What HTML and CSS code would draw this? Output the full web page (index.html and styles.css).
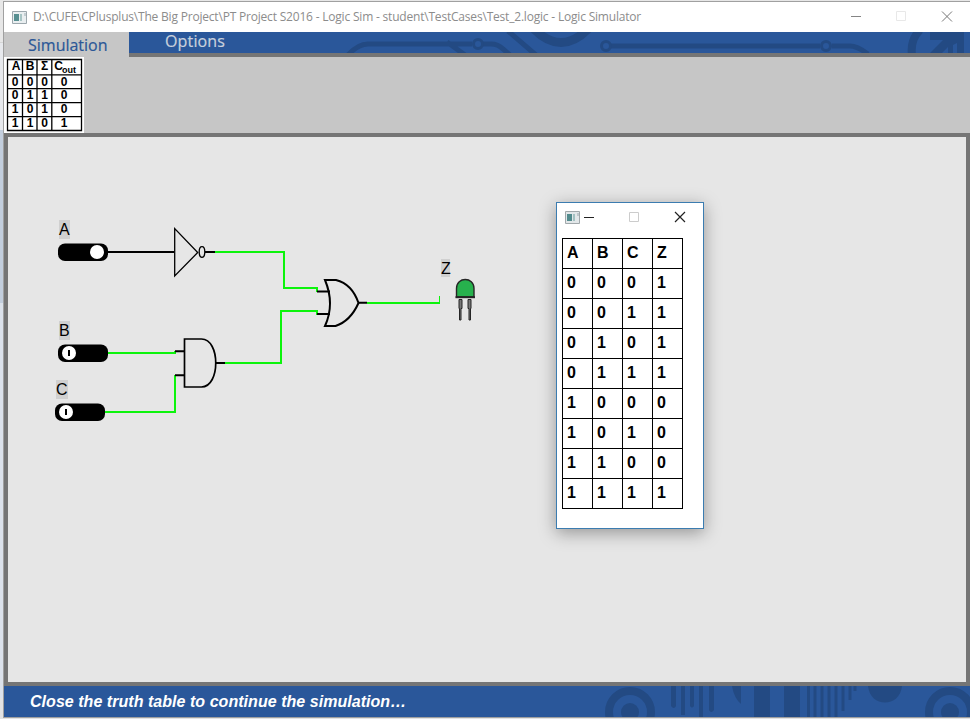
FILE: index.html
```html
<!DOCTYPE html>
<html lang="en">
<head>
<meta charset="utf-8">
<title>Logic Simulator</title>
<link rel="stylesheet" href="styles.css">
</head>
<body>
<main class="window">
  <header class="titlebar">
    <svg class="app-icon" width="15" height="13" viewBox="0 0 15 13"><path fill="#e9eef0" stroke="#9ca7ad" d="M.5.5h14v12H.5z"/><path fill="#578f91" d="M2 3h5v7H2z"/><path fill="#a6c4c4" d="M8 3h2v7H8z"/><path fill="#c3cdd1" d="M12 2h2v3h-2z"/></svg>
    <span class="title">D:\CUFE\CPlusplus\The Big Project\PT Project S2016 - Logic Sim - student\TestCases\Test_2.logic - Logic Simulator</span>
    <svg class="controls" width="104" height="12" viewBox="0 0 104 12" fill="none"><path stroke="#858585" d="M0 5.500h10"/><path stroke="#e8e8e8" d="M45.500.500h9v9h-9z"/><path stroke="#777" d="M91 .5l10 10m0-10l-10 10"/></svg>
  </header>
  <nav class="tabs">
    <div class="tab active">Simulation</div>
    <div class="ribbon">
      <svg class="circuit" width="841" height="21" viewBox="129 32 841 21" fill="none" stroke="#234a83" stroke-width="5">
        <path d="M348 55q10-11 20-11h104M447 42l18 13M483 44h8q7 0 12 5l7 6M508 31l28 24M611 46h209M832 46h18q7 0 18 8"/>
        <circle cx="478" cy="44" r="4.500" stroke-width="3"/><circle cx="606" cy="46" r="4.500" stroke-width="3"/><circle cx="826" cy="46" r="4.500" stroke-width="3"/>
        <path stroke-width="9" d="M533 28q28 29 56 0"/>
        <path stroke-width="8" d="M920 30q-10 10-8 25"/><path stroke="none" fill="#234a83" d="M930 32h34v22h-7V43l-4 2v9h-5v-7l-7 7h-12l14-14h-13z"/>
      </svg>
      <div class="tab options">Options</div>
    </div>
  </nav>
  <section class="toolbar">
    <svg class="table-tool" width="80" height="76" viewBox="4 57 80 76">
      <path fill="#fff" d="M4 57h80v76H4z"/>
      <path fill="none" stroke="#000" stroke-width="1.300" d="M7.500 59.500h74v71h-74zM22.500 59.500v71M37 59.500v71M51.800 59.500v71M7.500 74.800h74M7.500 88.600h74M7.500 102.600h74M7.500 116.700h74"/>
      <g class="tool-text"><text x="16" y="70.200">A</text><text x="30" y="70.200">B</text><text x="44.500" y="70.200">Σ</text><text x="58.500" y="70.200">C</text><text class="sub" x="69" y="73">out</text>
      <text x="15" y="85.500">0</text><text x="30" y="85.500">0</text><text x="44.500" y="85.500">0</text><text x="64" y="85.500">0</text>
      <text x="15" y="99.300">0</text><text x="30" y="99.300">1</text><text x="44.500" y="99.300">1</text><text x="64" y="99.300">0</text>
      <text x="15" y="113.300">1</text><text x="30" y="113.300">0</text><text x="44.500" y="113.300">1</text><text x="64" y="113.300">0</text>
      <text x="15" y="127.300">1</text><text x="30" y="127.300">1</text><text x="44.500" y="127.300">0</text><text x="64" y="127.300">1</text></g>
    </svg>
  </section>
  <section class="canvas">
    <svg class="schematic" width="958" height="545" viewBox="8 137 958 545">
      <g fill="none" stroke="#0cf40c" stroke-width="2">
        <path d="M215 252h69v36h33v4M224 363h57v-52h36v4M107 353h68v-2M105 412h70v-37M367 303h72"/>
        <path stroke-width="1" d="M439.500 304v-8"/>
      </g>
      <g fill="none" stroke="#000" stroke-width="2">
        <path d="M108 252h66M205 252h10M175 351.300h9M175 375.300h9M216 363h9M317 291.500h13M317 314h13M358 302.800h9"/>
        <path stroke-width="1.300" d="M174.700 228.500v47.500l23-23.500z"/><ellipse cx="202" cy="252" rx="2.800" ry="5.300" stroke-width="1.300"/>
        <path stroke-width="1.700" d="M184.500 339h17c19 0 19 48 0 48h-17z"/>
        <path d="M325 280h11q16 4 22.500 23-8 18-23 23H325q10-22 0-46z"/>
      </g>
      <g><rect x="58" y="243.500" width="50" height="17.500" rx="7"/><circle cx="97" cy="252" r="7" fill="#fff"/>
      <rect x="58" y="344.500" width="50" height="17.500" rx="7"/><circle cx="69" cy="353" r="7" fill="#fff"/><path d="M68 350h2v6h-2z"/>
      <rect x="55" y="403.500" width="50" height="17.500" rx="7"/><circle cx="66" cy="412" r="7" fill="#fff"/><path d="M65 409h2v6h-2z"/></g>
      <g fill="#d0d0d0"><path d="M59 220h11v19H59zM59 321h11v19H59zM56 380h12v19H56zM441 259h9v18h-9z"/></g>
      <g class="labels"><text x="59" y="235">A</text><text x="59" y="336">B</text><text x="56" y="395">C</text><text x="441" y="274">Z</text></g>
      <g stroke="#252525"><path fill="#27b14d" stroke-width="1.400" d="M456.500 297v-8.500c0-12 17.500-12 17.500 0V297z"/><path stroke-width="2" d="M455.500 297.200h19.500"/><path fill="#777" d="M459 299.500h3v9h-1v11.500h-1.500v-11.500H459zM468 299.500h3v9h-.5v11.500H469v-11.500h-1z"/></g>
    </svg>
    <section class="dialog">
      <header class="dialog-bar">
        <svg width="15" height="13" viewBox="0 0 15 13"><path fill="#e2e7e9" stroke="#a1a8ab" d="M.5.500h14v12H.500z"/><path fill="#528b8d" d="M2 3h5v7H2z"/><path fill="#a3c1c1" d="M8 3h2v7H8z"/><path fill="#bec7cb" d="M12 2h2v3h-2z"/></svg>
        <svg width="104" height="12" viewBox="0 0 104 12" fill="none"><path stroke="#222" d="M4 6.500h10"/><path stroke="#ccc" d="M49.500 1.500h9v9h-9z"/><path stroke="#222" stroke-width="1.200" d="M95 1l10 10m0-10L95 11"/></svg>
      </header>
      <table>
        <tr><th>A</th><th>B</th><th>C</th><th>Z</th></tr>
        <tr><td>0</td><td>0</td><td>0</td><td>1</td></tr>
        <tr><td>0</td><td>0</td><td>1</td><td>1</td></tr>
        <tr><td>0</td><td>1</td><td>0</td><td>1</td></tr>
        <tr><td>0</td><td>1</td><td>1</td><td>1</td></tr>
        <tr><td>1</td><td>0</td><td>0</td><td>0</td></tr>
        <tr><td>1</td><td>0</td><td>1</td><td>0</td></tr>
        <tr><td>1</td><td>1</td><td>0</td><td>0</td></tr>
        <tr><td>1</td><td>1</td><td>1</td><td>1</td></tr>
      </table>
    </section>
  </section>
  <footer class="status">
    <span>Close the truth table to continue the simulation…</span>
    <svg width="380" height="31" viewBox="590 686 380 31" fill="#234a83">
      <g fill="none" stroke="#234a83" stroke-width="8"><circle cx="630" cy="712" r="21"/><circle cx="950" cy="712" r="21"/></g><circle cx="630" cy="712" r="9"/><circle cx="950" cy="712" r="9"/>
      <path d="M671 686h5v20q-2 4-5 0zM681 686h4v29h-4zM690 686h4v20q-2 3-4 0zM699 686h4v31h-4zM709 686h5v24q-3 4-5 0zM732 686h9v18q-7-6-9-18zM754 686h16v31h-16zM784 686h16v31h-16zM868 686h34c-2 22-32 22-34 0z"/>
      <path fill="none" stroke="#234a83" stroke-width="3" d="M808.500 686v31M815 686v31M822 686v31M829 686v31M836 686v31M843 686v25M850 686v14M855 686v5"/>
    </svg>
  </footer>
</main>
</body>
</html>
```
FILE: styles.css
```css
* { box-sizing: border-box; }
body { margin: 0; width: 970px; height: 719px; overflow: hidden; background: linear-gradient(#e7e7e7 0 42px, #d5d5d5 42px 43px, #e7e9ed 43px 130px, #c3cedd 130px 303px, #dce2eb 303px 698px, #e3e3e3 698px); font-family: "Liberation Sans", Arial, sans-serif; }
svg { display: block; flex: none; }
.window { margin: 1px 0 0 3px; width: 967px; height: 717px; border: solid #a0a0a0; border-width: 1px 0 1px 1px; display: flex; flex-direction: column; }
.titlebar { height: 30px; flex: none; background: #fff; display: flex; align-items: center; padding: 0 15px 0 8px; }
.title { font: 12px/20px "Open Sans", sans-serif; color: #8c8c8c; white-space: nowrap; margin-left: 6px; letter-spacing: -.197px; }
.controls { margin-left: auto; }
.tabs { height: 25px; flex: none; display: flex; background: #c6c6c6; }
.tab { font: 16px/24px "Open Sans", sans-serif; }
.active { width: 125px; padding: 1px 0 0 24px; color: #2b5797; -webkit-text-stroke: .2px #2b5797; }
.ribbon { width: 841px; background: #2a579a; border-bottom: 4px solid #757575; display: grid; overflow: hidden; }
.ribbon > * { grid-area: 1 / 1; }
.options { color: #c9d1dd; line-height: 18px; padding-left: 36px; letter-spacing: .15px; -webkit-text-stroke: .2px #c9d1dd; }
.toolbar { height: 76px; flex: none; background: #c6c6c6; }
.tool-text { font: bold 12px "Liberation Sans", sans-serif; text-anchor: middle; }
.tool-text .sub { font-size: 9px; }
.canvas { height: 553px; flex: none; border: 4px solid #757575; background: #e6e6e6; position: relative; }
.labels { font: 16px "Liberation Sans", sans-serif; }
.dialog { position: absolute; left: 548px; top: 65px; width: 148px; height: 327px; border: 1px solid #3b7cb0; background: #fff; box-shadow: 0 4px 16px rgba(0,0,0,.35); }
.dialog-bar { height: 28px; display: flex; align-items: center; padding-left: 8px; }
.dialog-bar svg + svg { overflow: visible; }
table { border-collapse: collapse; table-layout: fixed; width: 121px; margin: 7px 0 0 5px; }
th, td { border: 1px solid #000; height: 30px; padding: 0 0 2px 4px; font: bold 16px/18px "Liberation Sans", sans-serif; text-align: left; }
.status { height: 31px; flex: none; background: #2a579a; color: #fff; display: flex; align-items: center; justify-content: space-between; font: italic bold 16px/20px "Liberation Sans", sans-serif; letter-spacing: .04px; padding-left: 26px; }
```
